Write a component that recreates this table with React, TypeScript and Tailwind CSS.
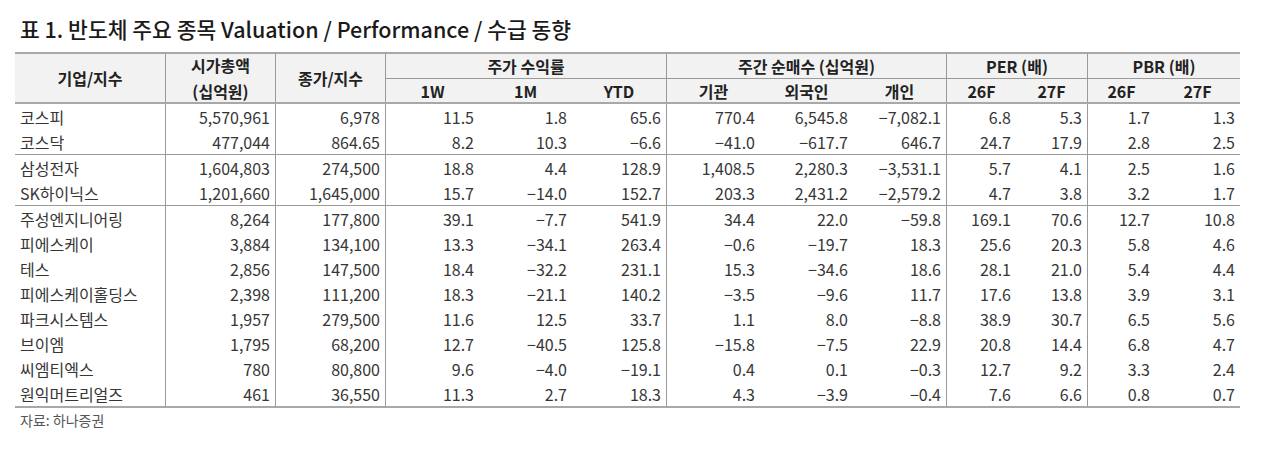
import React from "react";

type Row = { name: string; v: string[] };

const groups: Row[][] = [
  [
    { name: "코스피", v: ["5,570,961", "6,978", "11.5", "1.8", "65.6", "770.4", "6,545.8", "−7,082.1", "6.8", "5.3", "1.7", "1.3"] },
    { name: "코스닥", v: ["477,044", "864.65", "8.2", "10.3", "−6.6", "−41.0", "−617.7", "646.7", "24.7", "17.9", "2.8", "2.5"] },
  ],
  [
    { name: "삼성전자", v: ["1,604,803", "274,500", "18.8", "4.4", "128.9", "1,408.5", "2,280.3", "−3,531.1", "5.7", "4.1", "2.5", "1.6"] },
    { name: "SK하이닉스", v: ["1,201,660", "1,645,000", "15.7", "−14.0", "152.7", "203.3", "2,431.2", "−2,579.2", "4.7", "3.8", "3.2", "1.7"] },
  ],
  [
    { name: "주성엔지니어링", v: ["8,264", "177,800", "39.1", "−7.7", "541.9", "34.4", "22.0", "−59.8", "169.1", "70.6", "12.7", "10.8"] },
    { name: "피에스케이", v: ["3,884", "134,100", "13.3", "−34.1", "263.4", "−0.6", "−19.7", "18.3", "25.6", "20.3", "5.8", "4.6"] },
    { name: "테스", v: ["2,856", "147,500", "18.4", "−32.2", "231.1", "15.3", "−34.6", "18.6", "28.1", "21.0", "5.4", "4.4"] },
    { name: "피에스케이홀딩스", v: ["2,398", "111,200", "18.3", "−21.1", "140.2", "−3.5", "−9.6", "11.7", "17.6", "13.8", "3.9", "3.1"] },
    { name: "파크시스템스", v: ["1,957", "279,500", "11.6", "12.5", "33.7", "1.1", "8.0", "−8.8", "38.9", "30.7", "6.5", "5.6"] },
    { name: "브이엠", v: ["1,795", "68,200", "12.7", "−40.5", "125.8", "−15.8", "−7.5", "22.9", "20.8", "14.4", "6.8", "4.7"] },
    { name: "씨엠티엑스", v: ["780", "80,800", "9.6", "−4.0", "−19.1", "0.4", "0.1", "−0.3", "12.7", "9.2", "3.3", "2.4"] },
    { name: "원익머트리얼즈", v: ["461", "36,550", "11.3", "2.7", "18.3", "4.3", "−3.9", "−0.4", "7.6", "6.6", "0.8", "0.7"] },
  ],
];

// columns (index in v) that start a bordered group
const leftBorder = [true, true, true, false, false, true, false, false, true, false, true, false];

const COLS = "grid-cols-[150px_110px_110px_94px_93px_94px_94px_93px_93px_70px_71px_68px_85px]";

export default function App() {
  return (
    <div className="w-[1280px] h-[452px] bg-white font-['Noto_Sans_CJK_KR','Noto_Sans',sans-serif] text-[#363636] px-[15px] pt-[16px]">
      <div className="pl-[5px] h-[26px] leading-[26px] text-[21.5px] font-medium text-[#1a1a1a] whitespace-nowrap">
        표 1. 반도체 주요 종목 Valuation / Performance / 수급 동향
      </div>
      <div className="mt-[10px] w-[1225px] border-t-2 border-b-2 border-[#a8a8a8]">
        {/* header */}
        <div className={`grid ${COLS} grid-rows-[25px_23px] bg-[#f2f2f2] border-b-2 border-[#a8a8a8] text-[16px] font-bold text-[#222] leading-none`}>
          <div className="row-span-2 flex items-center justify-center">기업/지수</div>
          <div className="row-span-2 flex flex-col items-center justify-center gap-[6px] border-l border-[#9a9a9a] leading-[20px]">
            <span>시가총액</span>
            <span>(십억원)</span>
          </div>
          <div className="row-span-2 flex items-center justify-center border-l border-[#9a9a9a]">종가/지수</div>
          <div className="col-span-3 flex items-center justify-center border-l border-b border-[#9a9a9a]">주가 수익률</div>
          <div className="col-span-3 flex items-center justify-center border-l border-b border-[#9a9a9a]">주간 순매수 (십억원)</div>
          <div className="col-span-2 flex items-center justify-center border-l border-b border-[#9a9a9a]">PER (배)</div>
          <div className="col-span-2 flex items-center justify-center border-l border-b border-[#9a9a9a]">PBR (배)</div>
          <div className="flex items-center justify-center border-l border-[#9a9a9a]">1W</div>
          <div className="flex items-center justify-center">1M</div>
          <div className="flex items-center justify-center">YTD</div>
          <div className="flex items-center justify-center border-l border-[#9a9a9a]">기관</div>
          <div className="flex items-center justify-center">외국인</div>
          <div className="flex items-center justify-center">개인</div>
          <div className="flex items-center justify-center border-l border-[#9a9a9a]">26F</div>
          <div className="flex items-center justify-center">27F</div>
          <div className="flex items-center justify-center border-l border-[#9a9a9a]">26F</div>
          <div className="flex items-center justify-center">27F</div>
        </div>
        {/* body */}
        {groups.map((g, gi) => (
          <div key={gi} className={gi < groups.length - 1 ? "border-b border-[#9a9a9a]" : ""}>
            {g.map((r) => (
              <div key={r.name} className={`grid ${COLS} h-[25px] text-[16px] leading-none`}>
                <div className="flex items-center pl-[5px] whitespace-nowrap">{r.name}</div>
                {r.v.map((val, i) => (
                  <div
                    key={i}
                    className={`flex items-center justify-end pr-[5px] whitespace-nowrap ${leftBorder[i] ? "border-l border-[#9a9a9a]" : ""}`}
                  >
                    {val}
                  </div>
                ))}
              </div>
            ))}
          </div>
        ))}
      </div>
      <div className="pl-[5px] mt-[3px] text-[14px] leading-[18px] text-[#555]">자료: 하나증권</div>
    </div>
  );
}
